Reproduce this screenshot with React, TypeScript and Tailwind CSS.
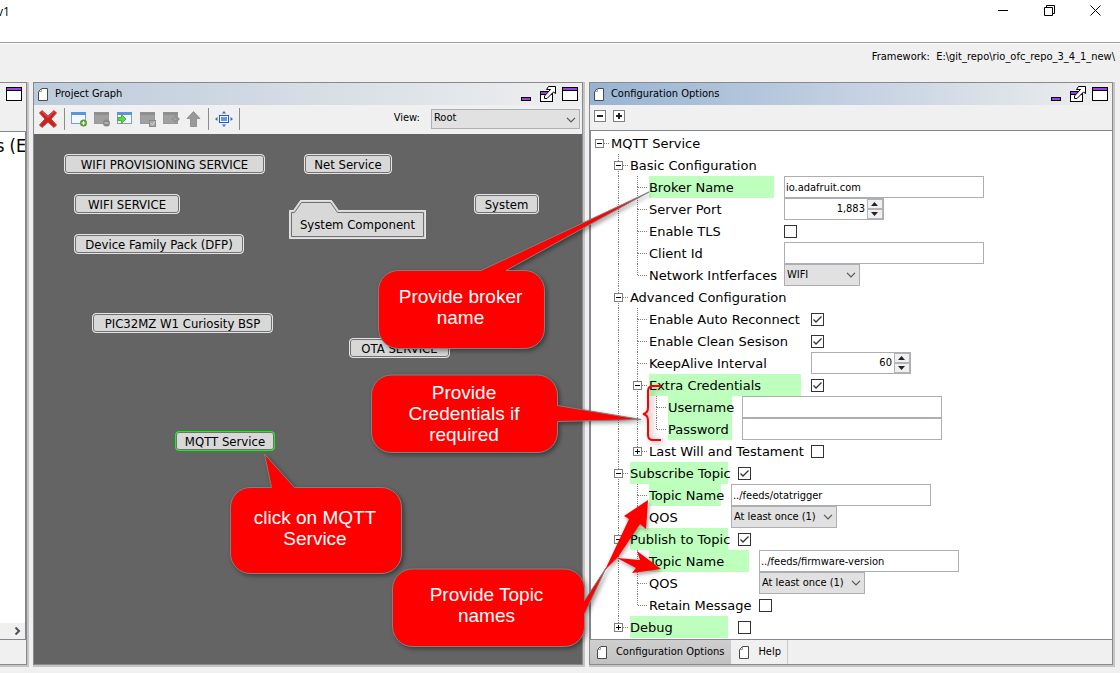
import type { ReactNode } from "react";

const UI = "font-['DejaVu_Sans_Condensed','DejaVu_Sans',sans-serif]";

function PageIcon() {
  return (
    <svg width="10" height="13" viewBox="0 0 10 13" className="shrink-0">
      <path d="M3.5 .5H9.5V12.5H.5V3.5Z" fill="#fff" stroke="#4a4a4a" />
      <path d="M3.5 .5V3.5H.5" fill="none" stroke="#9a9a9a" />
    </svg>
  );
}

function MaximizeIcon() {
  return (
    <svg width="16" height="14" viewBox="0 0 16 14" shapeRendering="crispEdges">
      <rect width="16" height="14" fill="#000" />
      <rect x="1" y="1" width="14" height="2" fill="#a23be8" />
      <rect x="1" y="4" width="14" height="9" fill="#fff" />
    </svg>
  );
}

function FloatIcon() {
  return (
    <svg width="17" height="16" viewBox="0 0 17 16">
      <g shapeRendering="crispEdges">
        <rect y="5" width="13" height="11" fill="#000" />
        <rect x="1" y="6" width="11" height="2" fill="#a23be8" />
        <rect x="1" y="9" width="11" height="6" fill="#fff" />
      </g>
      <path d="M8.500 .5H15.500V7.500L13.500 6L7 12.500H4.500V10L10.500 3.500H6.500Z" fill="#fff" stroke="#000" />
    </svg>
  );
}

function PanelControls() {
  return (
    <div className="flex h-4 items-end gap-[9px]">
      <button aria-label="Minimize" className="pb-px">
        <svg width="10" height="4" viewBox="0 0 10 4" shapeRendering="crispEdges">
          <rect width="10" height="4" fill="#000" />
          <rect x="1" y="1" width="8" height="2" fill="#a23be8" />
        </svg>
      </button>
      <button aria-label="Float"><FloatIcon /></button>
      <button aria-label="Maximize" className="-ml-1 pb-px"><MaximizeIcon /></button>
    </div>
  );
}

function Chevron({ className = "" }: { className?: string }) {
  return (
    <svg width="10" height="6" viewBox="0 0 10 6" className={className}>
      <path d="M1 .8L5 4.800L9 .8" fill="none" stroke="#555" strokeWidth="1.2" />
    </svg>
  );
}

function Select({ label, value, className }: { label: string; value: string; className: string }) {
  return (
    <div className={`grid h-[22px] items-center ${className}`}>
      <select aria-label={label} className="col-start-1 row-start-1 h-full w-full appearance-none border border-[#adadb4] bg-[#e1e1e1] px-0.5 text-[11px] leading-[14px] text-black outline-none">
        <option>{value}</option>
      </select>
      <Chevron className="pointer-events-none col-start-1 row-start-1 mr-1 justify-self-end" />
    </div>
  );
}

function TextField({ label, value = "" }: { label: string; value?: string }) {
  return <input aria-label={label} defaultValue={value} className="h-[22px] w-[200px] border border-[#adadb4] bg-white px-px text-[11px] text-black outline-none" />;
}

function Check({ label, checked = false }: { label: string; checked?: boolean }) {
  return (
    <span className="grid size-[13px]">
      <input type="checkbox" aria-label={label} defaultChecked={checked} className="peer col-start-1 row-start-1 size-[13px] appearance-none border border-[#333] bg-white" />
      <svg width="13" height="13" viewBox="0 0 13 13" className="pointer-events-none invisible col-start-1 row-start-1 peer-checked:visible">
        <path d="M2.500 6.500L5 9L10.500 3.500" fill="none" stroke="#333" strokeWidth="1.300" />
      </svg>
    </span>
  );
}

function Spinner({ label, value }: { label: string; value: string }) {
  return (
    <div className="flex h-[22px] w-[100px] border border-[#adadb4] bg-white">
      <input aria-label={label} defaultValue={value} className="w-0 grow bg-transparent pr-0.5 text-right text-[11px] text-black outline-none" />
      <div className="flex w-4 flex-col">
        <button aria-label={`Increase ${label}`} className="flex grow items-center justify-center border border-[#b4b4b4] bg-[#f0f0f0]">
          <svg width="7" height="4" viewBox="0 0 7 4"><path d="M0 4L3.500 0L7 4Z" fill="#222" /></svg>
        </button>
        <button aria-label={`Decrease ${label}`} className="flex grow items-center justify-center border border-[#b4b4b4] bg-[#f0f0f0]">
          <svg width="7" height="4" viewBox="0 0 7 4"><path d="M0 0L3.500 4L7 0Z" fill="#222" /></svg>
        </button>
      </div>
    </div>
  );
}

type Guide = "none" | "line" | "tee" | "end" | "minus" | "plus" | "minusRoot" | "plusEnd";

function GuideCell({ kind }: { kind: Guide }) {
  const dots = { stroke: "#808080", strokeDasharray: "1 1" };
  const box = kind.startsWith("minus") || kind.startsWith("plus");
  const up = kind !== "none" && kind !== "minusRoot";
  const down = up && kind !== "end" && kind !== "plusEnd";
  return (
    <svg width="19" height="22" viewBox="0 0 19 22" className="shrink-0" shapeRendering="crispEdges">
      {up && <path d="M7.500 0V11" {...dots} />}
      {down && <path d="M7.500 11V22" {...dots} />}
      {kind !== "none" && kind !== "line" && <path d="M8 11.500H17" {...dots} />}
      {box && (
        <>
          <rect x="3.500" y="7.500" width="8" height="8" fill="#fff" stroke="#808080" />
          <path d="M5 11.500H10" stroke="#000" />
          {kind.startsWith("plus") && <path d="M7.500 9V14" stroke="#000" />}
        </>
      )}
    </svg>
  );
}

type RowData = { guides: Guide[]; text: string; width?: string; hot?: boolean; field?: ReactNode };

const BASIC = "w-[125px]";
const ADV = "w-[152px]";
const TOP = "w-[98px]";

const rows: RowData[] = [
  { guides: ["minusRoot"], text: "MQTT Service" },
  { guides: ["none", "minus"], text: "Basic Configuration" },
  { guides: ["none", "line", "tee"], text: "Broker Name", width: BASIC, hot: true, field: <TextField label="Broker Name" value="io.adafruit.com" /> },
  { guides: ["none", "line", "tee"], text: "Server Port", width: BASIC, field: <Spinner label="Server Port" value="1,883" /> },
  { guides: ["none", "line", "tee"], text: "Enable TLS", width: BASIC, field: <Check label="Enable TLS" /> },
  { guides: ["none", "line", "tee"], text: "Client Id", width: BASIC, field: <TextField label="Client Id" /> },
  { guides: ["none", "line", "end"], text: "Network Intferfaces", width: BASIC, field: <Select label="Network Intferfaces" value="WIFI" className="w-[76px]" /> },
  { guides: ["none", "minus"], text: "Advanced Configuration" },
  { guides: ["none", "line", "tee"], text: "Enable Auto Reconnect", width: ADV, field: <Check label="Enable Auto Reconnect" checked /> },
  { guides: ["none", "line", "tee"], text: "Enable Clean Sesison", width: ADV, field: <Check label="Enable Clean Sesison" checked /> },
  { guides: ["none", "line", "tee"], text: "KeepAlive Interval", width: ADV, field: <Spinner label="KeepAlive Interval" value="60" /> },
  { guides: ["none", "line", "minus"], text: "Extra Credentials", width: ADV, hot: true, field: <Check label="Extra Credentials" checked /> },
  { guides: ["none", "line", "line", "tee"], text: "Username", width: "w-16", hot: true, field: <TextField label="Username" /> },
  { guides: ["none", "line", "line", "end"], text: "Password", width: "w-16", hot: true, field: <TextField label="Password" /> },
  { guides: ["none", "line", "plusEnd"], text: "Last Will and Testament", width: ADV, field: <Check label="Last Will and Testament" /> },
  { guides: ["none", "minus"], text: "Subscribe Topic", width: TOP, hot: true, field: <Check label="Subscribe Topic" checked /> },
  { guides: ["none", "line", "tee"], text: "Topic Name", width: "w-[72px]", hot: true, field: <TextField label="Subscribe Topic Name" value="../feeds/otatrigger" /> },
  { guides: ["none", "line", "end"], text: "QOS", width: "w-[72px]", field: <Select label="Subscribe QOS" value="At least once (1)" className="w-[106px]" /> },
  { guides: ["none", "minus"], text: "Publish to Topic", width: TOP, hot: true, field: <Check label="Publish to Topic" checked /> },
  { guides: ["none", "line", "tee"], text: "Topic Name", width: "w-[100px]", hot: true, field: <TextField label="Publish Topic Name" value="../feeds/firmware-version" /> },
  { guides: ["none", "line", "tee"], text: "QOS", width: "w-[100px]", field: <Select label="Publish QOS" value="At least once (1)" className="w-[106px]" /> },
  { guides: ["none", "line", "end"], text: "Retain Message", width: "w-[100px]", field: <Check label="Retain Message" /> },
  { guides: ["none", "plusEnd"], text: "Debug", width: TOP, hot: true, field: <Check label="Debug" /> },
];

function TreeRow({ row }: { row: RowData }) {
  return (
    <li className="flex h-[22px] items-center pl-px">
      {row.guides.map((g, i) => <GuideCell key={i} kind={g} />)}
      <span className={`mr-2.5 h-[22px] shrink-0 pt-px font-['DejaVu_Sans',sans-serif] text-[13px] leading-[22px] whitespace-nowrap ${row.width ?? ""} ${row.hot ? "bg-[#beffbe]" : ""}`}>{row.text}</span>
      {row.field}
    </li>
  );
}

function WindowGlyph({ children, disabled = false }: { children?: ReactNode; disabled?: boolean }) {
  return (
    <svg width="17" height="16" viewBox="0 0 17 16">
      <rect x=".5" y="1.500" width="14" height="11" fill={disabled ? "#a0a0a0" : "#f2f8ff"} stroke={disabled ? "#989898" : "#7f9fc0"} />
      <rect x="0" y="1" width="15" height="3" fill={disabled ? "#8f8f8f" : "#5b93dc"} />
      {children}
    </svg>
  );
}

function GraphToolbar() {
  const sep = <span className="h-[22px] w-px bg-[#8c8c8c]" />;
  return (
    <div className="flex h-[29px] shrink-0 items-center bg-[#f0f0f0] pb-0.5 pl-1">
      <button aria-label="Remove" className="mr-1.5">
        <svg width="20" height="20" viewBox="0 0 20 20">
          <path d="M4 1.500L10 7L16 1.500L18.500 4L13 10L18.500 16L16 18.500L10 13L4 18.500L1.500 16L7 10L1.500 4Z" fill="#cf2020" stroke="#c04040" strokeLinejoin="round" />
          <path d="M4 2.500L10 8.500L16 2.500" fill="none" stroke="#e06060" />
        </svg>
      </button>
      {sep}
      <div className="ml-1.5 flex gap-1.5 pr-[7px]">
        <button aria-label="Add component">
          <WindowGlyph><circle cx="12.500" cy="12" r="3.500" fill="#5a9a32" /><path d="M10.500 12H14.500M12.500 10V14" stroke="#fff" strokeWidth="1.200" /></WindowGlyph>
        </button>
        <button aria-label="Remove component">
          <WindowGlyph disabled><circle cx="12.500" cy="12" r="3.500" fill="#888" /><path d="M10.500 12H14.500" stroke="#ccc" strokeWidth="1.200" /></WindowGlyph>
        </button>
        <button aria-label="Import">
          <WindowGlyph><path d="M1 6.500H4.500V3.500L9 8L4.500 12.500V9.500H1Z" fill="#5ddb3c" stroke="#37a51f" strokeWidth=".8" /></WindowGlyph>
        </button>
        <button aria-label="Verify">
          <WindowGlyph disabled><rect x="9.500" y="9.500" width="6" height="6" fill="#a8a8a8" stroke="#888" /><path d="M10.500 12L12.500 14L15 10.500" fill="none" stroke="#ddd" /></WindowGlyph>
        </button>
        <button aria-label="Export">
          <WindowGlyph disabled><path d="M9 8L13 4.500V7H16V9H13V11.500Z" fill="#a0a0a0" stroke="#858585" strokeWidth=".8" /></WindowGlyph>
        </button>
        <button aria-label="Up">
          <svg width="15" height="16" viewBox="0 0 15 16"><path d="M7.500 .5L14 7.500H10.500V15.500H4.500V7.500H1Z" fill="#999" stroke="#888" strokeWidth=".8" /></svg>
        </button>
      </div>
      {sep}
      <button aria-label="Fit to view" className="mx-1.5">
        <svg width="18" height="16" viewBox="0 0 18 16">
          <rect x="4.500" y="4.500" width="9" height="7" fill="#fff" stroke="#2a56c8" />
          <rect x="6" y="6" width="6" height="4" fill="#5a9cf8" />
          <path d="M9 0L11 2.500H7ZM9 16L11 13.500H7ZM0 8L2.500 6V10ZM18 8L15.500 6V10Z" fill="#3464cc" />
        </svg>
      </button>
      {sep}
      <label className="mr-[11px] ml-auto text-[11px]" htmlFor="view">View:</label>
      <div className="mr-0.5 grid h-5 w-[149px] items-center">
        <select id="view" className="col-start-1 row-start-1 h-5 w-full appearance-none border border-[#adadb4] bg-[#e1e1e1] px-0.5 text-[11px] outline-none"><option>Root</option></select>
        <Chevron className="pointer-events-none col-start-1 row-start-1 mt-0.5 mr-1 justify-self-end" />
      </div>
    </div>
  );
}

const nodes = [
  { text: "WIFI PROVISIONING SERVICE", place: "left-[30px] top-[20px] w-[201px]" },
  { text: "Net Service", place: "left-[270px] top-[20px] w-[88px]" },
  { text: "WIFI SERVICE", place: "left-[40px] top-[60px] w-[106px]" },
  { text: "System", place: "left-[440px] top-[60px] w-[65px]" },
  { text: "Device Family Pack (DFP)", place: "left-[40px] top-[100px] w-[170px]" },
  { text: "PIC32MZ W1 Curiosity BSP", place: "left-[58px] top-[179px] w-[181px]" },
  { text: "OTA SERVICE", place: "left-[315px] top-[204px] w-[101px]" },
  { text: "MQTT Service", place: "left-[141px] top-[297px] w-[100px]", selected: true },
];

function Graph() {
  return (
    <div className="relative min-h-[530px] grow overflow-hidden bg-[#646464]">
      {nodes.map((n) => (
        <button key={n.text} className={`absolute flex h-5 items-center justify-center rounded-[4px] border bg-[#d8d8d8] pt-px text-[13px] whitespace-nowrap text-black inset-ring inset-ring-[#707070] ${n.selected ? "border-[#00ff00]" : "border-[#e4e4e4]"} ${n.place}`}>{n.text}</button>
      ))}
      <button className="absolute top-[66px] left-[255px] grid h-[39px] w-[137px] text-[13px] text-black">
        <svg width="137" height="39" viewBox="0 0 137 39" className="col-start-1 row-start-1">
          <path d="M.5 10.500H4.500L11.500 .5H42.500L49.500 10.500H136.500V38.500H.5Z" fill="#d8d8d8" stroke="#e4e4e4" />
          <path d="M2.500 12.500H5.500L12.500 2.500H41.500L48.500 12.500H134.500V36.500H2.500Z" fill="#d8d8d8" stroke="#707070" />
        </svg>
        <span className="col-start-1 row-start-1 self-end pb-[5px] whitespace-nowrap">System Component</span>
      </button>
    </div>
  );
}

function Callouts() {
  const text = "absolute flex items-center justify-center text-center text-[19px] leading-[21px] text-white";
  return (
    <div className="pointer-events-none absolute inset-0 overflow-hidden font-['Liberation_Sans',Arial,sans-serif]">
      <svg width="1120" height="673" viewBox="0 0 1120 673" className="absolute top-0 left-0">
        <g fill="#f00" stroke="#808080" className="drop-shadow-[2px_2px_2px_rgba(0,0,0,0.4)]">
          <path d="M399 270.500H481L649 192L506 270.500H524A20 20 0 0 1 544.500 291V328A20 20 0 0 1 524 348.500H399A20 20 0 0 1 378.500 328V291A20 20 0 0 1 399 270.500Z" />
          <path d="M392 375H538A20 20 0 0 1 557.500 395V405.500L641 419.500L557.500 421.500V432A20 20 0 0 1 538 452.500H392A20 20 0 0 1 371.500 432V395A20 20 0 0 1 392 375Z" />
          <path d="M251 487.500H271.500L264.500 454L294.500 487.500H381A20 20 0 0 1 401.500 508V553A20 20 0 0 1 381 573.500H251A20 20 0 0 1 230.500 553V508A20 20 0 0 1 251 487.500Z" />
          <path d="M413 569H564A20 20 0 0 1 584.500 589V600.500L606 568L584.500 614V626A20 20 0 0 1 564 646.500H413A20 20 0 0 1 392.500 626V589A20 20 0 0 1 413 569Z" />
        </g>
        <g fill="#f00" className="drop-shadow-[1px_2px_2px_rgba(0,0,0,0.4)]">
          <path d="M605 570L629 519L624 516L648 500L646 529L640 524L618 557Z" />
          <path d="M617 558L640 560L637 551L661 569L632 573L636 568Z" />
        </g>
        <path d="M661 386H653Q648 386 648 391V408Q648 413 643 414Q648 415 648 420V435Q648 440 653 440H661" fill="none" stroke="#f00" strokeWidth="2" className="drop-shadow-[3px_2px_3px_rgba(90,0,0,0.45)]" />
      </svg>
      <p className={`${text} top-[268px] left-[378px] h-[77px] w-[165px]`}>Provide broker<br />name</p>
      <p className={`${text} top-[375px] left-[371px] h-[77px] w-[186px]`}>Provide<br />Credentials if<br />required</p>
      <p className={`${text} top-[485px] left-[230px] h-[86px] w-[170px]`}>click on MQTT<br />Service</p>
      <p className={`${text} top-[566px] left-[392px] h-[77px] w-[189px]`}>Provide Topic<br />names</p>
    </div>
  );
}

const PANEL = "flex min-w-0 flex-col border border-[#8a8a8a] bg-[#f0f0f0] shadow-[1px_1px_0_1px_#c4c4c4]";

export default function App() {
  return (
    <div className={`relative flex min-h-screen flex-col overflow-hidden bg-[#f0f0f0] text-[11px] text-black ${UI}`}>
      <header className="flex h-[43px] shrink-0 items-start justify-between border-b border-[#a0a0a0] bg-white">
        <h1 className="-ml-[3px] pt-1 font-['Open_Sans',sans-serif] text-[12px] leading-4">v1</h1>
        <div className="flex pr-0.5">
          <button aria-label="Minimize window" className="flex h-[21px] w-[46px] items-center justify-center"><svg width="11" height="11" viewBox="0 0 11 11"><path d="M0 5.500H10" stroke="#000" /></svg></button>
          <button aria-label="Restore window" className="flex h-[21px] w-[46px] items-center justify-center"><svg width="11" height="11" viewBox="0 0 11 11" fill="none" stroke="#000"><path d="M.5 2.500H8.500V10.500H.5ZM2.500 2.500V.5H10.500V8.500H8.500" /></svg></button>
          <button aria-label="Close window" className="flex h-[21px] w-[46px] items-center justify-center"><svg width="11" height="11" viewBox="0 0 11 11" stroke="#000"><path d="M.5 .5L10.500 10.500M10.500 .5L.5 10.500" /></svg></button>
        </div>
      </header>
      <p className="flex h-[39px] shrink-0 items-start justify-end border-t border-white pt-[5px] pr-[5px] whitespace-pre">Framework:  E:\git_repo\rio_ofc_repo_3_4_1_new\</p>

      <main className="flex grow gap-[6px] pr-[7px] pb-2">
        <section className={`${PANEL} w-[27px] shrink-0 border-l-0`}>
          <div className="flex h-[22px] shrink-0 items-center pl-1.5"><button aria-label="Maximize"><MaximizeIcon /></button></div>
          <div className="mt-[26px] flex grow flex-col border-t border-r border-b border-[#84848f] bg-white">
            <p className="grow overflow-hidden pt-1 text-[18px] leading-5 whitespace-nowrap"><span className="-ml-1">s (E</span></p>
            <button aria-label="Scroll right" className="flex h-4 items-center justify-end bg-[#f0f0f0] pr-1">
              <svg width="7" height="8" viewBox="0 0 7 8"><path d="M1.500 .5L5 4L1.500 7.500" fill="none" stroke="#505050" strokeWidth="2" /></svg>
            </button>
          </div>
          <div className="h-6 shrink-0" />
        </section>

        <section className={`${PANEL} flex-[550]`}>
          <header className="flex h-[22px] shrink-0 items-center bg-linear-to-r from-[#bccbdb] to-[#efefef] pr-1 pl-1">
            <PageIcon />
            <h2 className="ml-[7px] grow pt-px">Project Graph</h2>
            <PanelControls />
          </header>
          <GraphToolbar />
          <Graph />
        </section>

        <section className={`${PANEL} flex-[524]`}>
          <header className="flex h-[22px] shrink-0 items-center bg-linear-to-r from-[#98b3d2] to-[#efefef] pr-1 pl-1">
            <PageIcon />
            <h2 className="ml-[7px] grow pt-px">Configuration Options</h2>
            <PanelControls />
          </header>
          <div className="flex h-[25px] shrink-0 gap-[7px] pt-[5px] pl-1">
            <button aria-label="Collapse all" className="flex size-3 items-center justify-center border border-[#808080] bg-white"><svg width="8" height="8" viewBox="0 0 8 8"><path d="M1 4H7" stroke="#222" strokeWidth="2" /></svg></button>
            <button aria-label="Expand all" className="flex size-3 items-center justify-center border border-[#808080] bg-white"><svg width="8" height="8" viewBox="0 0 8 8"><path d="M1 4H7M4 1V7" stroke="#222" strokeWidth="2" /></svg></button>
          </div>
          <ul className="grow border-y border-l border-[#828790] bg-white pt-px">
            {rows.map((r, i) => <TreeRow key={i} row={r} />)}
          </ul>
          <nav className="flex h-6 shrink-0">
            <button className="flex items-center gap-[9px] bg-linear-to-b from-[#cfcfcf] to-[#c2c2c2] px-[7px]"><PageIcon />Configuration Options</button>
            <button className="flex items-center gap-[9px] border-r border-[#c8c8c8] pr-1.5 pl-2"><PageIcon />Help</button>
          </nav>
        </section>
      </main>
      <Callouts />
    </div>
  );
}
